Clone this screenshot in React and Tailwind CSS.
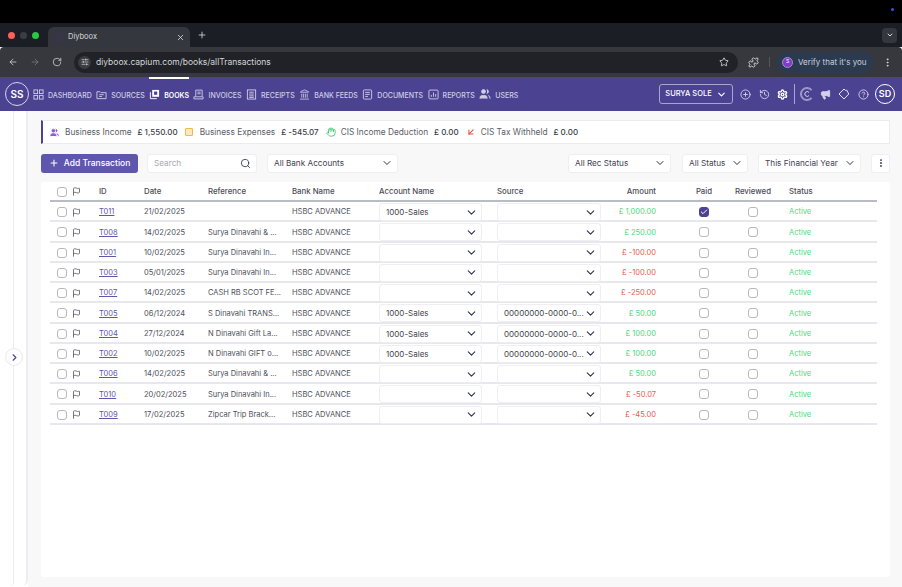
import {
  ArrowDownLeft, ArrowLeft, ArrowRight, Check, ChevronDown, ChevronRight, CircleHelp, CirclePlus, EllipsisVertical,
  Flag, Hand, History, Landmark, Megaphone, Plus, Puzzle, RotateCw, Search, Settings, SlidersHorizontal, Star, Users, X,
} from 'lucide-react';

const Svg = ({ children }) => (
  <svg viewBox="0 0 12 12" className="w-[11px] h-[11px] shrink-0" fill="none" stroke="currentColor" strokeWidth="1">
    {children}
  </svg>
);

const DashboardIcon = () => (
  <Svg>
    <rect x="1" y="1" width="4" height="4" />
    <rect x="7" y="1" width="4" height="4" />
    <rect x="1" y="7" width="4" height="4" />
    <rect x="7" y="7" width="4" height="4" />
  </Svg>
);
const SourcesIcon = () => (
  <Svg>
    <path d="M1 3h3.5l1 1H11v6.5H1z" />
    <path d="M3.5 6.2h5M3.5 8.2h3" />
  </Svg>
);
const BooksIcon = () => (
  <Svg>
    <path d="M1.5 3.5v7h7" />
    <rect x="3.5" y="1" width="7.5" height="7.5" fill="currentColor" stroke="none" />
    <rect x="5.5" y="2.8" width="3.5" height="3.5" fill="#4b4391" stroke="none" />
  </Svg>
);
const InvoicesIcon = () => (
  <Svg>
    <path d="M3 8V1.2h7V8" />
    <path d="M4.8 3.4h3.5M4.8 5.2h3.5" />
    <path d="M1 8.5h10v2.3H1z" />
  </Svg>
);
const ReceiptsIcon = () => (
  <Svg>
    <rect x="1.5" y="1" width="9" height="10" />
    <path d="M3.5 3.5h5M3.5 5.5h5M3.5 7.5h5M3.5 9.2h5" />
  </Svg>
);
const DocumentsIcon = () => (
  <Svg>
    <rect x="1.5" y="1" width="9" height="10" rx="1" />
    <path d="M3.5 3.7h5M3.5 5.9h5M3.5 8.1h3" />
  </Svg>
);
const ReportsIcon = () => (
  <Svg>
    <rect x="1" y="1.2" width="10" height="9.6" rx="1" />
    <path d="M3.6 8.5V6.5M6 8.5V3.8M8.4 8.5V5.5" />
  </Svg>
);
const UsersIcon = () => <Users className="w-[12px] h-[12px] shrink-0" fill="currentColor" strokeWidth={1.5} />;
const BankIcon = () => <Landmark className="w-[11px] h-[11px] shrink-0" strokeWidth={1.8} />;

const navItems = [
  { label: 'DASHBOARD', icon: DashboardIcon },
  { label: 'SOURCES', icon: SourcesIcon },
  { label: 'BOOKS', icon: BooksIcon, active: true },
  { label: 'INVOICES', icon: InvoicesIcon },
  { label: 'RECEIPTS', icon: ReceiptsIcon },
  { label: 'BANK FEEDS', icon: BankIcon },
  { label: 'DOCUMENTS', icon: DocumentsIcon },
  { label: 'REPORTS', icon: ReportsIcon },
  { label: 'USERS', icon: UsersIcon },
];

const rows = [
  { id: 'T011', date: '21/02/2025', ref: '', account: '1000-Sales', source: '', amount: '£ 1,000.00', paid: true },
  { id: 'T008', date: '14/02/2025', ref: 'Surya Dinavahi & ...', account: '', source: '', amount: '£ 250.00' },
  { id: 'T001', date: '10/02/2025', ref: 'Surya Dinavahi In...', account: '', source: '', amount: '£ -100.00', neg: true },
  { id: 'T003', date: '05/01/2025', ref: 'Surya Dinavahi In...', account: '', source: '', amount: '£ -100.00', neg: true },
  { id: 'T007', date: '14/02/2025', ref: 'CASH RB SCOT FE...', account: '', source: '', amount: '£ -250.00', neg: true },
  { id: 'T005', date: '06/12/2024', ref: 'S Dinavahi TRANS...', account: '1000-Sales', source: '00000000-0000-0...', amount: '£ 50.00' },
  { id: 'T004', date: '27/12/2024', ref: 'N Dinavahi Gift La...', account: '1000-Sales', source: '00000000-0000-0...', amount: '£ 100.00' },
  { id: 'T002', date: '10/02/2025', ref: 'N Dinavahi GIFT o...', account: '1000-Sales', source: '00000000-0000-0...', amount: '£ 100.00' },
  { id: 'T006', date: '14/02/2025', ref: 'Surya Dinavahi & ...', account: '', source: '', amount: '£ 50.00' },
  { id: 'T010', date: '20/02/2025', ref: 'Surya Dinavahi In...', account: '', source: '', amount: '£ -50.07', neg: true },
  { id: 'T009', date: '17/02/2025', ref: 'Zipcar Trip Brack...', account: '', source: '', amount: '£ -45.00', neg: true },
];

const gridCols = 'grid grid-cols-[22px_27px_45px_64px_84px_87px_118px_104px_55px_24px_48px_50px_99px] items-center pt-[1px]';

const Box = ({ checked }) => (
  <div className={`w-[10px] h-[10px] rounded-[3px] border flex items-center justify-center ${checked ? 'bg-[#4b4391] border-[#4b4391]' : 'bg-white border-[#b9b9b9]'}`}>
    {checked && <Check className="w-2 h-2 text-white" strokeWidth={3} />}
  </div>
);

const Filter = ({ label, className }) => (
  <div className={`h-[19px] bg-white rounded-[3px] border border-[#efeff3] flex items-center justify-between pl-[6px] pr-[4px] text-[8.2px] whitespace-nowrap text-[#3f4250] ${className}`}>
    <span>{label}</span>
    <ChevronDown className="w-[12px] h-[12px] shrink-0 text-[#2c3350]" strokeWidth={2} />
  </div>
);

const CellSelect = ({ value, className }) => (
  <div className={`h-[18px] bg-white rounded-[3px] border border-[#eeeef3] flex items-center justify-between pl-[6px] pr-[3px] text-[8px] whitespace-nowrap text-[#44454c] ${className}`}>
    <span>{value}</span>
    <ChevronDown className="w-[13px] h-[13px] shrink-0 text-[#2c3350]" strokeWidth={2} />
  </div>
);

const Stat = ({ icon, label, value, className }) => (
  <div className={`flex items-center whitespace-nowrap ${className}`}>
    {icon}
    <span className="text-[#5a5c68]">{label}</span>
    <span className="ml-[6px] text-[#3b3d49] font-medium text-[8px]">{value}</span>
  </div>
);

const BrowserChrome = () => (
  <div>
    <div className="h-[23px] bg-black flex justify-end pr-[8px] pt-[8px]">
      <div className="w-[3px] h-[3px] rounded-full bg-[#4f46e5]" />
    </div>
    <div className="h-[24px] bg-[#1b1e25] flex items-end">
      <div className="flex items-center gap-[5px] pl-[8px] w-[48px] h-[24px]">
        <div className="w-[7px] h-[7px] rounded-full bg-[#fe5f57]" />
        <div className="w-[7px] h-[7px] rounded-full bg-[#3b3d42]" />
        <div className="w-[7px] h-[7px] rounded-full bg-[#2bc840]" />
      </div>
      <div className="w-[142px] h-[20px] bg-[#34373e] rounded-t-[6px] flex items-center pl-[5px] pr-[5px] justify-between text-[7.5px] text-[#d6d7da]">
        <div className="flex items-center gap-[5px] pl-[1px]">
          <div className="w-[9px] h-[9px] rounded-full border border-[#3f2f63]" />
          <span>Diyboox</span>
        </div>
        <X className="w-[9px] h-[9px] text-[#e4e5e7]" />
      </div>
      <div className="h-[24px] flex items-center ml-[7px]">
        <Plus className="w-[10px] h-[10px] text-[#d7d8dc]" />
      </div>
      <div className="flex-1 h-[24px] flex items-center justify-end pr-[5px]">
        <div className="w-[15px] h-[15px] rounded-[4px] bg-[#34373e] flex items-center justify-center">
          <ChevronDown className="w-[8px] h-[8px] text-[#d7d8dc]" strokeWidth={3} />
        </div>
      </div>
    </div>
    <div className="h-[30px] bg-[#36383e] flex items-center rounded-t-[4px] text-[#c9cbd0]">
      <div className="flex items-center w-[74px] pl-[8px] gap-[12px]">
        <ArrowLeft className="w-[10px] h-[10px]" />
        <ArrowRight className="w-[10px] h-[10px] text-[#777a80]" />
        <RotateCw className="w-[10px] h-[10px]" />
      </div>
      <div className="w-[664px] h-[21px] bg-[#202227] rounded-full flex items-center justify-between pl-[10px] pr-[9px]">
        <div className="flex items-center gap-[5px]">
          <div className="w-[13px] h-[13px] rounded-full bg-[#3a3c42] flex items-center justify-center -ml-[6px]">
            <SlidersHorizontal className="w-[8px] h-[8px] text-[#dcdde0]" />
          </div>
          <span className="text-[8.5px] text-[#d5d6d9]">diyboox.capium.com/books/allTransactions</span>
        </div>
        <Star className="w-[10px] h-[10px] text-[#dcdde0]" />
      </div>
      <Puzzle className="w-[11px] h-[11px] ml-[10px] text-[#dcdde0]" />
      <div className="w-px h-[10px] bg-[#55575c] ml-[10px]" />
      <div className="ml-[6px] w-[98px] h-[21px] rounded-full bg-[#2c3a4f] flex items-center pl-[6px] gap-[5px] text-[8px] text-[#c6d0de]">
        <div className="w-[11px] h-[11px] rounded-full bg-[#7c3fc4] border border-[#a88bd6] text-[5px] text-white flex items-center justify-center">S</div>
        <span>Verify that it's you</span>
      </div>
      <EllipsisVertical className="w-[11px] h-[11px] ml-[8px] text-[#dcdde0]" />
    </div>
  </div>
);

const AppNav = () => (
  <nav className="h-[34px] bg-[#4b4391] flex items-center pl-[5px] pr-[7px] relative">
    <div className="w-[24px] h-[24px] rounded-full border border-[#d8d5ea] text-white text-[10px] font-semibold flex items-center justify-center shrink-0">SS</div>
    <div className="flex items-center gap-[4.5px] ml-[4px]">
      {navItems.map(({ label, icon: Icon, active }) => (
        <div key={label} className={`relative flex items-center gap-[4px] text-[7px] leading-none ${active ? 'text-white font-semibold' : 'text-[#cfcce6] font-medium'}`}>
          {active && <div className="absolute left-0 right-0 -top-[12px] h-[2px] bg-white" />}
          <Icon />
          <span className="mt-[2px]">{label}</span>
        </div>
      ))}
    </div>
    <div className="ml-auto flex items-center text-[#d4d1e8]">
      <div className="w-[74px] h-[20px] rounded-[3px] border border-[#a9a4d0] flex items-center justify-center gap-[4px] text-white text-[7.5px] font-medium">
        SURYA SOLE
        <ChevronDown className="w-[11px] h-[11px]" strokeWidth={2.5} />
      </div>
      <CirclePlus className="w-[11px] h-[11px] ml-[7px]" />
      <History className="w-[11px] h-[11px] ml-[8px]" />
      <Settings className="w-[11px] h-[11px] ml-[7px] text-white" strokeWidth={3} />
      <div className="w-px h-[20px] bg-[#a9a4d0] ml-[6px]" />
      <svg viewBox="0 0 14 14" className="w-[14px] h-[14px] ml-[5px]" fill="none">
        <path d="M11.6 3.2A6 6 0 1 0 11.6 10.8" stroke="#9d97c9" strokeWidth="2" />
        <path d="M9 5.4A2.4 2.4 0 1 0 9 8.6" stroke="#e4e2f2" strokeWidth="0.9" />
      </svg>
      <Megaphone className="w-[11px] h-[11px] ml-[6px]" fill="currentColor" />
      <svg viewBox="0 0 12 12" className="w-[12px] h-[12px] ml-[7px]" fill="none" stroke="#e4e2f2" strokeWidth="1">
        <path d="M6 1l1.6 1.6L8.6 2 10.8 6 6 11 1 6z" />
      </svg>
      <CircleHelp className="w-[11px] h-[11px] ml-[8px]" />
      <div className="w-[20px] h-[20px] ml-[6px] rounded-full border border-white text-white text-[9px] font-semibold flex items-center justify-center">SD</div>
    </div>
  </nav>
);

const App = () => (
  <div className="h-[587px] w-[902px] overflow-hidden flex flex-col bg-white font-['Inter',sans-serif]">
    <BrowserChrome />
    <AppNav />
    <div className="flex-1 flex min-h-0 relative">
      <aside className="w-[28px] bg-white rounded-br-[6px] border-r-2 border-[#efedf4] shrink-0 mb-[1px]">
        <div className="w-[14px] h-full border-r border-[#e8ecf6] rounded-br-[4px]" />
      </aside>
      <div className="absolute left-[5px] top-[237px] w-[18px] h-[18px] rounded-full bg-white border border-[#e8e8f0] flex items-center justify-center">
        <ChevronRight className="w-[11px] h-[11px] text-[#4b4391]" strokeWidth={2.5} />
      </div>
      <main className="flex-1 bg-[#f8f8f8] pl-[13px] pr-[12px] pt-[9px] pb-[10px] flex flex-col min-w-0">
        <div className="h-[24px] bg-white border border-[#ececf0] border-l-2 border-l-[#4b4391] flex items-center pl-[7px] text-[8.3px] shrink-0">
          <Stat icon={<Users className="w-[9px] h-[9px] mr-[6px] text-[#8c5fd6]" fill="#8c5fd6" />} label="Business Income" value="£ 1,550.00" />
          <Stat className="ml-[7px]" icon={<div className="w-[8px] h-[8px] mr-[7px] rounded-[1px] border border-[#f1b94c] bg-[#fde9bb]" />} label="Business Expenses" value="£ -545.07" />
          <Stat className="ml-[7px]" icon={<Hand className="w-[10px] h-[10px] mr-[5px] text-[#39c46b]" />} label="CIS Income Deduction" value="£ 0.00" />
          <Stat className="ml-[7px]" icon={<ArrowDownLeft className="w-[10px] h-[10px] mr-[5px] text-[#e5533d]" strokeWidth={2.5} />} label="CIS Tax Withheld" value="£ 0.00" />
        </div>

        <div className="flex items-center mt-[9px] h-[20px] shrink-0">
          <button className="w-[97px] h-[19px] bg-[#5f56ad] rounded-[3px] text-white text-[8.5px] font-medium flex items-center justify-center gap-[5px]">
            <Plus className="w-[10px] h-[10px]" strokeWidth={2.5} />
            Add Transaction
          </button>
          <div className="ml-[9px] w-[110px] h-[19px] bg-white rounded-[3px] border border-[#efeff3] flex items-center justify-between pl-[6px] pr-[5px] text-[8.2px] text-[#a6a8b0]">
            <span>Search</span>
            <Search className="w-[11px] h-[11px] text-[#3c4152]" strokeWidth={2} />
          </div>
          <Filter label="All Bank Accounts" className="ml-[10px] w-[131px]" />
          <Filter label="All Rec Status" className="ml-auto w-[103px]" />
          <Filter label="All Status" className="ml-[11px] w-[66px]" />
          <Filter label="This Financial Year" className="ml-[10px] w-[103px]" />
          <div className="ml-[10px] w-[19px] h-[19px] bg-white rounded-[3px] border border-[#efeff3] flex items-center justify-center">
            <EllipsisVertical className="w-[10px] h-[10px] text-[#2c3350]" strokeWidth={2.5} />
          </div>
        </div>

        <div className="flex-1 mt-[9px] bg-white rounded-[3px] pl-[9px] pr-[13px] text-[7.5px] text-[#4d4f5a] min-h-0">
          <div className={`${gridCols} h-[20px] border-b-2 border-[#b9bcc4] font-medium text-[7.8px] text-[#4a4c58]`}>
            <div className="pl-[7px]"><Box /></div>
            <Flag className="w-[9px] h-[9px] text-[#4a4c58]" />
            <span>ID</span>
            <span>Date</span>
            <span>Reference</span>
            <span>Bank Name</span>
            <span>Account Name</span>
            <span>Source</span>
            <span className="text-right">Amount</span>
            <span />
            <span className="text-center">Paid</span>
            <span className="text-center">Reviewed</span>
            <span className="pl-[11px]">Status</span>
          </div>
          {rows.map((row) => (
            <div key={row.id} className={`${gridCols} h-[20.25px] border-b-2 border-[#e6e8ee]`}>
              <div className="pl-[7px]"><Box /></div>
              <Flag className="w-[9px] h-[9px] text-[#4a4c58]" />
              <a className="text-[#5f56ad] underline">{row.id}</a>
              <span>{row.date}</span>
              <span className="whitespace-nowrap">{row.ref}</span>
              <span>HSBC ADVANCE</span>
              <CellSelect value={row.account} className="w-[103px]" />
              <CellSelect value={row.source} className="w-[104px]" />
              <span className={`text-right ${row.neg ? 'text-[#e5604d]' : 'text-[#4cd97b]'}`}>{row.amount}</span>
              <span />
              <div className="flex justify-center"><Box checked={row.paid} /></div>
              <div className="flex justify-center"><Box /></div>
              <span className="pl-[11px] text-[#4cd97b]">Active</span>
            </div>
          ))}
        </div>
      </main>
    </div>
  </div>
);

export default App;
